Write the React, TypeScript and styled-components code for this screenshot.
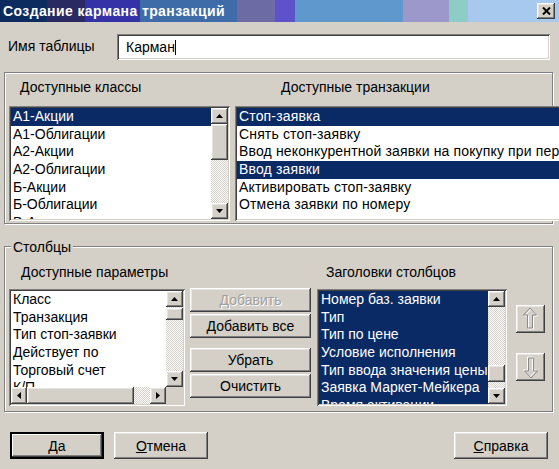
import * as React from "react";
import styled, { createGlobalStyle, css } from "styled-components";

const GlobalStyle = createGlobalStyle`
  html, body {
    margin: 0;
    padding: 0;
    background: #d4d0c8;
  }
  body {
    font-family: "Liberation Sans", Arial, sans-serif;
    font-size: 14px;
    color: #000;
  }
`;

const NAVY = "#0a2a66";

const raised = css`
  background: #d4d0c8;
  box-shadow: inset -1px -1px #404040, inset 1px 1px #ffffff,
    inset -2px -2px #808080, inset 2px 2px #e6e4e0;
`;

const sunken = css`
  box-shadow: inset 1px 1px #808080, inset -1px -1px #ffffff,
    inset 2px 2px #404040, inset -2px -2px #d4d0c8;
`;

export const Window = styled.div`
  width: 559px;
  height: 469px;
  background: #d4d0c8;
  display: flex;
  flex-direction: column;
  overflow: hidden;
`;

export const TitleBar = styled.div`
  height: 22px;
  flex: none;
  display: flex;
  align-items: center;
  justify-content: space-between;
  padding: 0 4px 0 3px;
  background: linear-gradient(
    to right,
    #0c2c60 0 47px,
    #2a2a62 47px 85px,
    #3432a6 85px 140px,
    #3d6ca8 140px 237px,
    #6c6ba4 237px 275px,
    #5e52ca 275px 295px,
    #5f98cc 295px 403px,
    #9c98cc 403px 449px,
    #8eccc8 449px 468px,
    #a8c9ee 468px
  );
`;

export const Title = styled.span`
  color: #fff;
  font-weight: bold;
  font-size: 14px;
  letter-spacing: 0.4px;
`;

export const CloseButton = styled.div`
  ${raised};
  width: 18px;
  height: 16px;
  display: flex;
  align-items: center;
  justify-content: center;
`;

export const Body = styled.div`
  flex: 1;
  display: flex;
  flex-direction: column;
  padding: 0 6px 0 4px;
`;

export const NameRow = styled.div`
  margin-top: 12px;
  display: flex;
  align-items: center;
`;

export const FieldLabel = styled.label`
  width: 109px;
  margin-left: 4px;
  margin-top: -2px;
`;

export const TextInput = styled.div`
  ${sunken};
  background: #fff;
  width: 433px;
  height: 26px;
  box-sizing: border-box;
  padding-left: 9px;
  display: flex;
  align-items: center;
`;

export const Caret = styled.span`
  display: inline-block;
  width: 1px;
  height: 15px;
  background: #000;
`;

export const Group = styled.div<{ $top: number; $pad: string }>`
  position: relative;
  margin-top: ${p => p.$top}px;
  border: 1px solid #808080;
  box-shadow: inset 1px 1px #ffffff, 1px 1px #ffffff;
  padding: ${p => p.$pad};
  display: flex;
`;

export const GroupCaption = styled.span`
  position: absolute;
  top: -7px;
  left: 6px;
  padding: 0 2px;
  line-height: 15px;
  background: #d4d0c8;
`;

export const Column = styled.div<{ $width?: number; $gap: number }>`
  display: flex;
  flex-direction: column;
  flex: ${p => (p.$width ? "none" : "1")};
  width: ${p => (p.$width ? `${p.$width}px` : "auto")};
  margin-left: ${p => p.$gap}px;
`;

export const ColumnLabel = styled.div<{ $indent: number; $space: number }>`
  line-height: 15px;
  padding-left: ${p => p.$indent}px;
  margin-bottom: ${p => p.$space}px;
  white-space: nowrap;
`;

export const ListBox = styled.div<{ $height: number; $dark?: boolean }>`
  ${sunken};
  background: ${p => (p.$dark ? NAVY : "#fff")};
  height: ${p => p.$height}px;
  box-sizing: border-box;
  padding: 2px;
  display: flex;
  flex-direction: column;
`;

export const ListMain = styled.div`
  flex: 1;
  display: flex;
  min-height: 0;
`;

export const Items = styled.ul<{ $dark?: boolean; $spacing?: number }>`
  list-style: none;
  margin: 0;
  padding: 0;
  flex: 1;
  overflow: hidden;
  letter-spacing: ${p => p.$spacing ?? 0}px;
  color: ${p => (p.$dark ? "#fff" : "#000")};
`;

export const Item = styled.li<{ $selected?: boolean }>`
  line-height: 17.7px;
  height: 17.7px;
  padding-left: 2px;
  white-space: nowrap;
  overflow: hidden;
  background: ${p => (p.$selected ? NAVY : "transparent")};
  color: ${p => (p.$selected ? "#fff" : "inherit")};
`;

export const VScroll = styled.div`
  width: 17px;
  flex: none;
  display: flex;
  flex-direction: column;
`;

export const HScroll = styled.div`
  flex: 1;
  height: 17px;
  display: flex;
`;

export const HRow = styled.div`
  display: flex;
  height: 17px;
  flex: none;
`;

export const Corner = styled.div`
  width: 17px;
  background: #d4d0c8;
`;

export const ScrollButton = styled.div<{ $w: number; $h: number }>`
  ${raised};
  width: ${p => p.$w}px;
  height: ${p => p.$h}px;
  flex: none;
  display: flex;
  align-items: center;
  justify-content: center;
`;

export const Track = styled.div<{ $horizontal?: boolean }>`
  flex: 1;
  display: flex;
  flex-direction: ${p => (p.$horizontal ? "row" : "column")};
  background-color: #fff;
  background-image: repeating-conic-gradient(#d4d0c8 0 25%, #ffffff 0 50%);
  background-size: 2px 2px;
`;

export const Thumb = styled.div<{ $horizontal?: boolean; $offset: number; $size: number }>`
  ${raised};
  flex: none;
  ${p =>
    p.$horizontal
      ? css`
          width: ${p.$size}px;
          margin-left: ${p.$offset}px;
        `
      : css`
          height: ${p.$size}px;
          margin-top: ${p.$offset}px;
        `}
`;

export const Button = styled.button<{ $w: number; $h: number; $default?: boolean }>`
  ${raised};
  border: ${p => (p.$default ? "1px solid #000" : "none")};
  ${p =>
    p.$default &&
    css`
      box-shadow: inset 0 0 0 1px #000, inset -2px -2px #404040, inset 2px 2px #ffffff,
        inset -3px -3px #808080;
    `}
  width: ${p => p.$w}px;
  height: ${p => p.$h}px;
  padding: 0;
  flex: none;
  font-family: inherit;
  font-size: 14px;
  color: #000;
  &:disabled {
    color: #a0a0a0;
    text-shadow: 1px 1px #ffffff;
  }
`;

export const Mnemonic = styled.span`
  text-decoration: underline;
`;

export const ButtonStack = styled.div`
  width: 121px;
  flex: none;
  margin-left: 5px;
  padding-top: 23px;
  display: flex;
  flex-direction: column;
`;

export const StackGap = styled.div<{ $h: number }>`
  height: ${p => p.$h}px;
  flex: none;
`;

export const MoveStack = styled.div`
  width: 29px;
  flex: none;
  margin-left: 9px;
  padding-top: 40px;
  display: flex;
  flex-direction: column;
  gap: 20px;
`;

export const Footer = styled.div`
  margin-top: 20px;
  display: flex;
  padding: 0 5px 0 6px;
  gap: 10px;
`;

export const Spacer = styled.div`
  flex: 1;
`;

type Dir = "up" | "down" | "left" | "right";

const Triangle = ({ dir }: { dir: Dir }) => {
  const pts: Record<Dir, string> = {
    up: "0,4 3.5,0 7,4",
    down: "0,0 7,0 3.5,4",
    left: "4,0 4,7 0,3.5",
    right: "0,0 0,7 4,3.5",
  };
  const vertical = dir === "up" || dir === "down";
  return (
    <svg width={vertical ? 7 : 4} height={vertical ? 4 : 7} viewBox={vertical ? "0 0 7 4" : "0 0 4 7"}>
      <polygon points={pts[dir]} fill="#000" />
    </svg>
  );
};

const VerticalBar = ({ offset, size }: { offset: number; size: number }) => (
  <VScroll>
    <ScrollButton $w={17} $h={16}><Triangle dir="up" /></ScrollButton>
    <Track>
      <Thumb $offset={offset} $size={size} />
    </Track>
    <ScrollButton $w={17} $h={16}><Triangle dir="down" /></ScrollButton>
  </VScroll>
);

const MoveArrow = ({ down }: { down?: boolean }) => {
  const d = "M14 3 L7.5 10 L11.5 10 L11.5 23 L16.5 23 L16.5 10 L20.5 10 Z";
  return (
    <svg width="29" height="28" viewBox="0 0 29 28">
      <g transform={down ? "rotate(180 14.5 14)" : undefined}>
        <path d={d} fill="none" stroke="#ffffff" strokeWidth="1" transform="translate(1 1)" />
        <path d={d} fill="none" stroke="#8a8a8a" strokeWidth="1" />
      </g>
    </svg>
  );
};

const classes = ["А1-Акции", "А1-Облигации", "А2-Акции", "А2-Облигации", "Б-Акции", "Б-Облигации", "В-Акции"];

const transactions = [
  { name: "Стоп-заявка", selected: true },
  { name: "Снять стоп-заявку" },
  { name: "Ввод неконкурентной заявки на покупку при первичном размещении" },
  { name: "Ввод заявки", selected: true },
  { name: "Активировать стоп-заявку" },
  { name: "Отмена заявки по номеру" },
];

const params = ["Класс", "Транзакция", "Тип стоп-заявки", "Действует по", "Торговый счет", "К/П"];

const headers = [
  "Номер баз. заявки",
  "Тип",
  "Тип по цене",
  "Условие исполнения",
  "Тип ввода значения цены",
  "Заявка Маркет-Мейкера",
  "Время активации",
];

export default function App() {
  return (
    <>
      <GlobalStyle />
      <Window>
        <TitleBar>
          <Title>Создание кармана транзакций</Title>
          <CloseButton>
            <svg width="9" height="8" viewBox="0 0 9 8">
              <path d="M1 0.5 L8 7.5 M8 0.5 L1 7.5" stroke="#000" strokeWidth="2" />
            </svg>
          </CloseButton>
        </TitleBar>
        <Body>
          <NameRow>
            <FieldLabel>Имя таблицы</FieldLabel>
            <TextInput>
              Карман<Caret />
            </TextInput>
          </NameRow>

          <Group $top={12} $pad="7px 3px 2px 4px">
            <Column $width={221} $gap={0}>
              <ColumnLabel $indent={11} $space={11}>Доступные классы</ColumnLabel>
              <ListBox $height={115}>
                <ListMain>
                  <Items>
                    {classes.map((c, i) => (
                      <Item key={c} $selected={i === 0}>{c}</Item>
                    ))}
                  </Items>
                  <VerticalBar offset={0} size={36} />
                </ListMain>
              </ListBox>
            </Column>
            <Column $gap={5}>
              <ColumnLabel $indent={46} $space={11}>Доступные транзакции</ColumnLabel>
              <ListBox $height={115}>
                <Items $spacing={0.15}>
                  {transactions.map(t => (
                    <Item key={t.name} $selected={t.selected}>{t.name}</Item>
                  ))}
                </Items>
              </ListBox>
            </Column>
          </Group>

          <Group $top={22} $pad="18px 7px 5px 4px">
            <GroupCaption>Столбцы</GroupCaption>
            <Column $width={176} $gap={0}>
              <ColumnLabel $indent={12} $space={9}>Доступные параметры</ColumnLabel>
              <ListBox $height={117}>
                <ListMain>
                  <Items>
                    {params.map(p => (
                      <Item key={p}>{p}</Item>
                    ))}
                  </Items>
                  <VerticalBar offset={1} size={12} />
                </ListMain>
                <HRow>
                  <HScroll>
                    <ScrollButton $w={16} $h={17}><Triangle dir="left" /></ScrollButton>
                    <Track $horizontal>
                      <Thumb $horizontal $offset={0} $size={107} />
                    </Track>
                    <ScrollButton $w={16} $h={17}><Triangle dir="right" /></ScrollButton>
                  </HScroll>
                  <Corner />
                </HRow>
              </ListBox>
            </Column>

            <ButtonStack>
              <Button $w={121} $h={24} disabled>Добавить</Button>
              <StackGap $h={2} />
              <Button $w={121} $h={24}>Добавить все</Button>
              <StackGap $h={10} />
              <Button $w={121} $h={24}>Убрать</Button>
              <StackGap $h={2} />
              <Button $w={121} $h={24}>Очистить</Button>
            </ButtonStack>

            <Column $width={190} $gap={6}>
              <ColumnLabel $indent={9} $space={9}>Заголовки столбцов</ColumnLabel>
              <ListBox $height={117} $dark>
                <ListMain>
                  <Items $dark>
                    {headers.map(h => (
                      <Item key={h}>{h}</Item>
                    ))}
                  </Items>
                  <VerticalBar offset={58} size={17} />
                </ListMain>
              </ListBox>
            </Column>

            <MoveStack>
              <Button $w={29} $h={28}><MoveArrow /></Button>
              <Button $w={29} $h={28}><MoveArrow down /></Button>
            </MoveStack>
          </Group>

          <Footer>
            <Button $w={94} $h={27} $default><Mnemonic>Д</Mnemonic>а</Button>
            <Button $w={94} $h={27}><Mnemonic>О</Mnemonic>тмена</Button>
            <Spacer />
            <Button $w={94} $h={27}><Mnemonic>С</Mnemonic>правка</Button>
          </Footer>
        </Body>
      </Window>
    </>
  );
}
